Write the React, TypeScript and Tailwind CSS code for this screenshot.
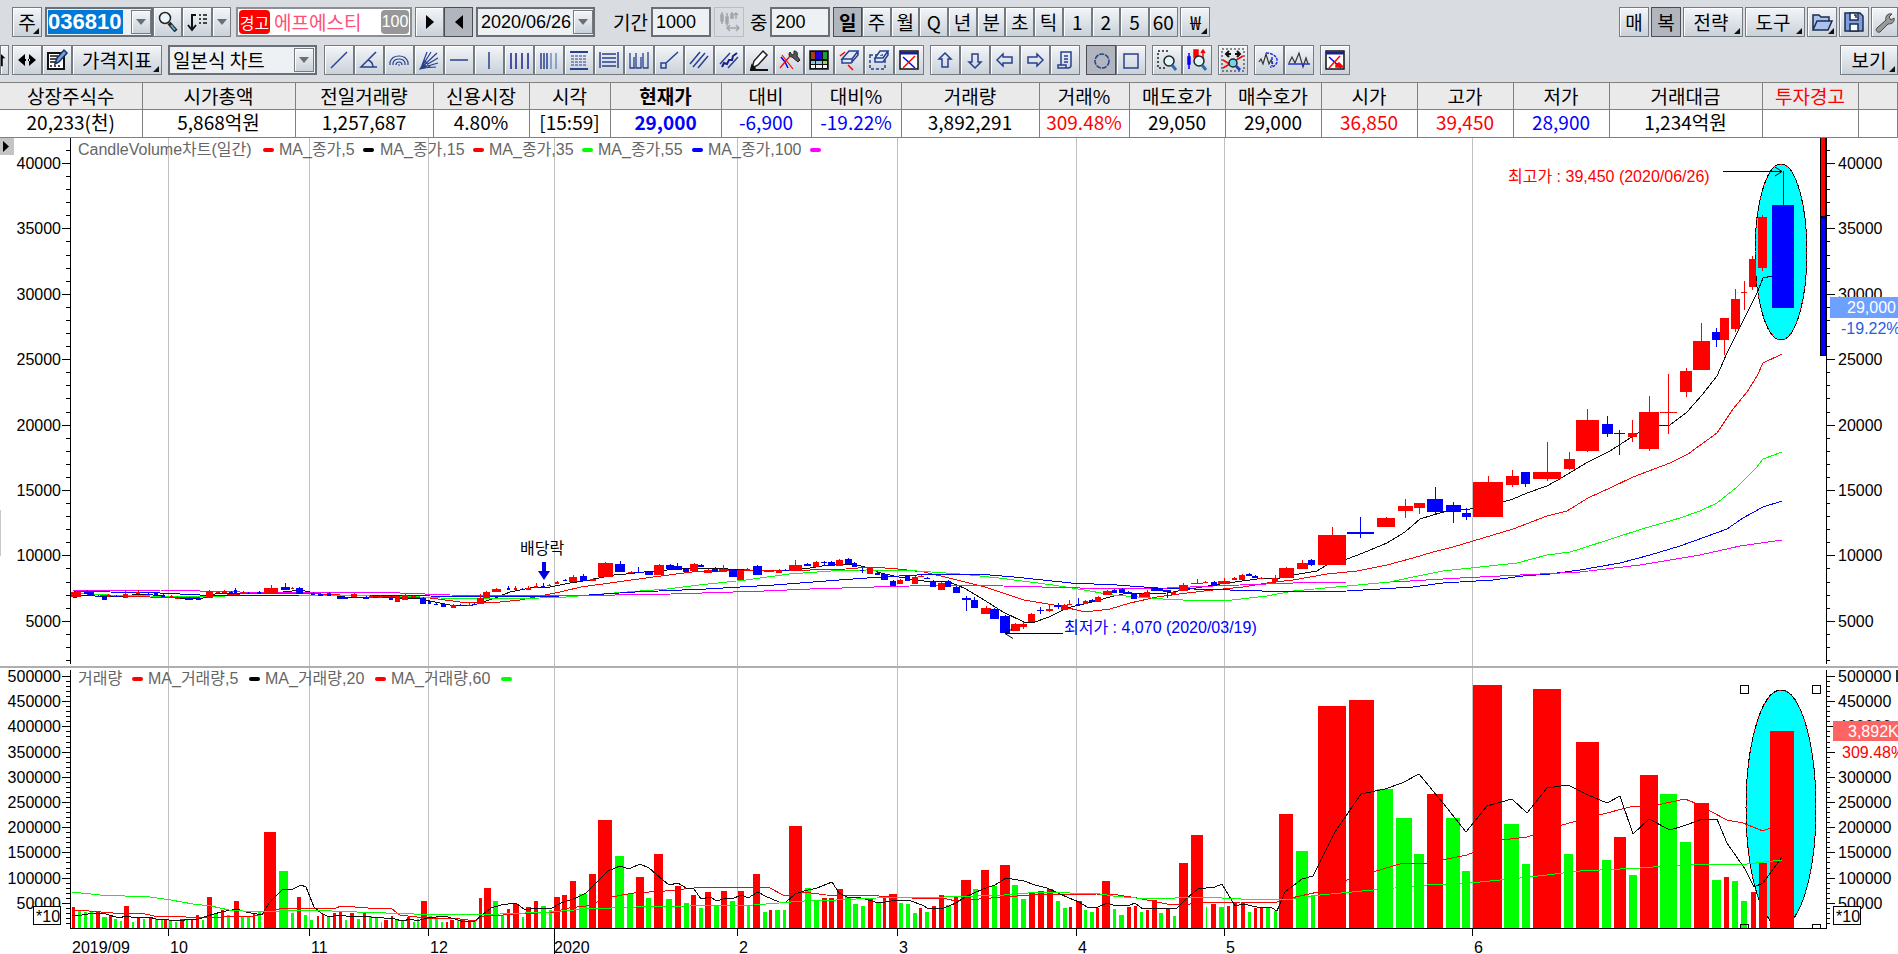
import type { ReactNode } from "react";
import clsx from "clsx";

const RED = "#ff0000";
const BLUE = "#0000ff";
const GREEN = "#00ff00";
const NAVY = "#27408f";

// x, width, top, rising
type Bar = [number, number, number, 0 | 1];
// x, width, body top, body bottom, rising, high, low
type Candle = [number, number, number, number, 0 | 1, number?, number?];

const BASE = 928;

const bars: Bar[] = [
  [72, 3, 907, 1], [78, 3, 911, 0], [84, 3, 912, 0], [90, 3, 912, 0], [96, 4, 912, 1], [102, 5, 917, 0],
  [109, 3, 915, 1], [114, 3, 919, 0], [120, 2, 921, 0], [124, 5, 906, 1], [132, 2, 922, 0], [137, 3, 918, 1],
  [143, 2, 919, 0], [149, 3, 917, 1], [155, 3, 919, 0], [161, 2, 920, 0], [164, 3, 920, 1], [169, 3, 920, 0],
  [175, 2, 922, 0], [180, 4, 919, 1], [186, 2, 919, 0], [191, 2, 919, 1], [196, 3, 915, 1], [202, 2, 920, 0],
  [207, 5, 897, 1], [214, 4, 913, 0], [221, 3, 910, 1], [227, 3, 915, 0], [234, 5, 901, 1], [241, 3, 917, 0],
  [247, 3, 916, 0], [253, 2, 913, 1], [258, 3, 912, 0], [264, 12, 832, 1], [279, 9, 871, 0], [291, 3, 913, 0],
  [297, 4, 897, 1], [304, 3, 915, 0], [310, 3, 920, 0], [317, 2, 916, 1], [322, 2, 914, 1], [327, 3, 916, 0],
  [333, 3, 913, 1], [339, 3, 912, 1], [345, 2, 920, 0], [350, 4, 913, 1], [357, 3, 919, 0], [363, 3, 913, 1],
  [369, 3, 916, 0], [375, 3, 917, 0], [381, 1, 922, 0], [384, 4, 920, 1], [391, 2, 916, 1], [395, 3, 919, 0],
  [401, 3, 921, 0], [407, 3, 917, 1], [413, 2, 922, 0], [417, 2, 919, 0], [421, 6, 901, 1], [429, 3, 916, 0],
  [435, 3, 917, 0], [441, 2, 922, 0], [446, 2, 922, 1], [450, 4, 920, 1], [457, 2, 920, 0], [460, 5, 920, 1],
  [468, 3, 920, 1], [473, 3, 920, 0], [479, 3, 898, 1], [484, 7, 888, 1], [493, 5, 901, 0], [501, 3, 915, 0],
  [507, 3, 909, 1], [513, 6, 904, 1], [522, 2, 917, 0], [526, 5, 907, 1], [534, 4, 901, 1], [541, 5, 906, 0],
  [549, 3, 910, 0], [554, 6, 897, 1], [562, 5, 895, 1], [570, 6, 881, 1], [579, 8, 894, 0], [589, 7, 874, 1],
  [598, 14, 820, 1], [615, 9, 856, 0], [627, 6, 894, 0], [636, 8, 877, 1], [646, 5, 898, 0], [654, 9, 854, 1],
  [666, 6, 899, 0], [675, 6, 886, 1], [684, 5, 903, 0], [691, 5, 895, 1], [699, 4, 908, 0], [705, 6, 892, 1],
  [714, 5, 906, 0], [721, 6, 891, 1], [730, 5, 901, 0], [738, 6, 891, 1], [747, 3, 905, 0], [753, 7, 874, 1],
  [763, 4, 912, 0], [769, 3, 910, 1], [775, 5, 910, 0], [783, 3, 910, 0], [789, 13, 826, 1], [805, 6, 888, 0],
  [814, 5, 901, 0], [822, 5, 898, 1], [829, 5, 898, 1], [837, 6, 889, 1], [845, 6, 897, 0], [853, 5, 904, 0],
  [861, 4, 906, 0], [868, 5, 899, 1], [876, 5, 903, 0], [883, 3, 897, 1], [889, 8, 894, 1], [899, 4, 903, 0],
  [906, 4, 904, 0], [913, 4, 913, 0], [919, 3, 908, 1], [925, 4, 912, 0], [932, 4, 906, 1], [939, 5, 895, 1],
  [946, 5, 905, 0], [954, 4, 896, 1], [961, 10, 880, 1], [973, 5, 889, 0], [981, 8, 870, 1], [992, 5, 886, 0],
  [1000, 10, 865, 1], [1012, 6, 885, 0], [1021, 5, 899, 0], [1029, 6, 893, 1], [1038, 6, 891, 1], [1047, 6, 889, 1],
  [1056, 4, 901, 0], [1063, 4, 908, 0], [1069, 3, 907, 1], [1076, 6, 901, 1], [1084, 3, 910, 0], [1090, 4, 912, 0],
  [1096, 3, 908, 1], [1102, 8, 881, 1], [1113, 3, 909, 0], [1119, 5, 915, 0], [1127, 4, 907, 1], [1134, 3, 906, 1],
  [1140, 3, 912, 0], [1146, 3, 910, 1], [1152, 5, 900, 1], [1159, 4, 913, 0], [1166, 4, 908, 1], [1173, 3, 916, 0],
  [1179, 9, 863, 1], [1191, 12, 835, 1], [1206, 1, 907, 0], [1211, 5, 904, 1], [1219, 5, 907, 0], [1227, 3, 906, 1],
  [1233, 4, 903, 1], [1241, 4, 903, 1], [1248, 3, 912, 0], [1254, 3, 908, 1], [1260, 3, 908, 1], [1266, 4, 908, 0],
  [1274, 3, 911, 0], [1279, 14, 814, 1], [1296, 12, 851, 0], [1311, 4, 895, 0], [1318, 28, 706, 1], [1349, 25, 700, 1],
  [1377, 16, 789, 0], [1396, 16, 818, 0], [1414, 10, 854, 0], [1427, 16, 794, 1], [1446, 14, 818, 0], [1462, 8, 871, 0],
  [1473, 29, 685, 1], [1504, 15, 824, 0], [1522, 8, 864, 0], [1533, 28, 689, 1], [1564, 9, 854, 0], [1576, 23, 742, 1],
  [1602, 9, 860, 0], [1614, 12, 837, 1], [1629, 8, 875, 0], [1640, 18, 775, 1], [1660, 17, 794, 0], [1680, 11, 842, 0],
  [1694, 15, 803, 1], [1712, 9, 880, 0], [1724, 5, 877, 1], [1732, 6, 881, 0], [1741, 6, 901, 0], [1751, 5, 892, 1],
  [1759, 8, 863, 1], [1770, 24, 731, 1],
];

const candles: Candle[] = [
  [71, 10, 592, 597, 1], [84, 6, 591, 594, 0], [88, 6, 592, 596, 0], [95, 6, 596, 597, 0], [102, 5, 597, 600, 0],
  [107, 3, 595, 597, 1], [114, 5, 596, 597, 0], [123, 5, 594, 598, 1, 591], [136, 4, 592, 594, 1, 590], [146, 5, 594, 595, 0],
  [154, 4, 593, 595, 0], [161, 4, 595, 597, 0], [170, 3, 596, 597, 1], [175, 5, 597, 599, 1], [185, 8, 598, 600, 0],
  [196, 5, 598, 600, 0], [206, 7, 591, 598, 1, 590], [216, 4, 592, 593, 1], [222, 5, 591, 593, 1], [229, 4, 592, 593, 0],
  [234, 3, 590, 594, 0, 588], [241, 4, 592, 594, 1], [247, 3, 593, 594, 0], [257, 4, 592, 594, 0], [264, 14, 588, 593, 1, 585],
  [281, 9, 587, 590, 0, 583], [291, 3, 588, 589, 1], [296, 7, 588, 594, 0], [311, 4, 593, 595, 0], [318, 5, 594, 596, 0],
  [327, 4, 593, 596, 0], [337, 11, 597, 599, 0], [351, 6, 594, 597, 1], [363, 6, 597, 599, 0], [369, 4, 596, 598, 1],
  [378, 5, 596, 598, 1], [389, 4, 597, 600, 0], [395, 5, 597, 602, 1], [402, 6, 595, 600, 1], [411, 5, 596, 598, 1],
  [420, 6, 598, 604, 0], [428, 3, 601, 604, 0], [434, 4, 604, 605, 0], [441, 5, 604, 607, 0], [451, 5, 605, 608, 1],
  [458, 5, 605, 606, 0], [467, 4, 605, 606, 1, 603], [472, 5, 604, 605, 0], [477, 7, 598, 604, 1, 594], [483, 7, 592, 598, 1],
  [492, 9, 589, 592, 1], [507, 3, 588, 590, 0, 586], [514, 3, 588, 590, 1, 586], [520, 4, 589, 590, 0], [526, 5, 588, 590, 1, 586],
  [534, 4, 586, 588, 1, 583], [541, 4, 586, 588, 0, 583], [547, 4, 585, 586, 1], [555, 4, 582, 584, 1], [563, 4, 580, 581, 0],
  [569, 8, 577, 582, 1, 575], [580, 7, 576, 581, 0, 574], [590, 6, 579, 581, 1], [598, 15, 563, 577, 1], [615, 10, 564, 572, 0, 561],
  [628, 6, 572, 573, 1], [634, 9, 572, 573, 0, 567], [645, 8, 572, 575, 0], [654, 10, 565, 575, 1], [666, 8, 565, 569, 0],
  [673, 9, 566, 570, 0, 563], [683, 6, 569, 572, 0], [690, 8, 564, 571, 1], [698, 6, 565, 567, 0], [704, 8, 570, 573, 1],
  [712, 6, 569, 572, 0, 567], [719, 9, 569, 571, 1, 565], [729, 8, 570, 577, 0], [737, 7, 570, 580, 1], [744, 6, 569, 571, 1],
  [753, 9, 566, 575, 0, 565], [764, 10, 571, 572, 1], [776, 6, 570, 573, 1], [782, 7, 570, 571, 0], [789, 13, 565, 570, 1, 560],
  [804, 7, 564, 566, 0], [813, 6, 562, 567, 1], [821, 6, 562, 563, 0, 561, 565], [828, 7, 562, 566, 0, 561], [836, 7, 560, 566, 1, 559],
  [845, 7, 559, 564, 0, 558], [852, 5, 563, 567, 0], [860, 4, 570, 571, 0, 568, 573], [867, 6, 568, 574, 1], [875, 5, 573, 575, 0],
  [881, 7, 574, 580, 0], [890, 6, 581, 586, 0], [897, 6, 580, 584, 1], [905, 5, 576, 581, 0], [912, 6, 577, 584, 1],
  [918, 6, 576, 577, 1], [924, 6, 578, 579, 0], [930, 6, 581, 587, 0], [938, 7, 583, 590, 1], [945, 6, 581, 587, 0],
  [953, 7, 587, 593, 0], [962, 9, 598, 600, 0, 596, 611], [971, 7, 600, 608, 0, 597], [981, 10, 608, 614, 1, 606], [990, 9, 609, 619, 0],
  [1000, 10, 616, 633, 0], [1011, 9, 624, 631, 1], [1019, 8, 624, 627, 1, 622, 629], [1028, 7, 614, 622, 1], [1037, 7, 610, 611, 0, 607, 614],
  [1046, 7, 609, 611, 1, 604, 612], [1054, 8, 605, 607, 0, 603, 609], [1061, 7, 605, 610, 1], [1067, 5, 604, 605, 1, 600], [1076, 5, 604, 605, 0, 598],
  [1083, 5, 601, 604, 1], [1089, 6, 600, 602, 0], [1095, 6, 597, 602, 1], [1103, 9, 591, 595, 1], [1112, 5, 590, 593, 0],
  [1119, 6, 589, 593, 0], [1125, 7, 592, 594, 0], [1131, 6, 594, 599, 0], [1139, 6, 594, 597, 1], [1144, 6, 592, 597, 1, 590],
  [1151, 12, 588, 591, 0], [1163, 8, 590, 592, 0, 590, 598], [1171, 5, 592, 595, 1], [1179, 9, 585, 591, 1, 583], [1191, 12, 583, 584, 1, 579],
  [1203, 5, 582, 583, 1], [1211, 6, 582, 586, 0], [1218, 12, 581, 584, 1, 578], [1232, 5, 578, 580, 1], [1239, 6, 575, 580, 1],
  [1246, 6, 574, 576, 0], [1252, 6, 576, 578, 0], [1258, 6, 578, 579, 1], [1272, 6, 578, 582, 1, 575], [1279, 15, 568, 578, 1],
  [1297, 11, 563, 569, 1, 560], [1308, 7, 560, 565, 0, 559, 566], [1318, 28, 535, 565, 1, 527], [1347, 27, 532, 534, 0, 517, 538],
  [1377, 18, 518, 527, 1, 517], [1398, 15, 506, 511, 1, 499, 518], [1414, 11, 503, 508, 1, 503, 514], [1427, 16, 499, 512, 0, 487, 514],
  [1446, 15, 505, 512, 0, 502, 523], [1462, 9, 513, 517, 0, 508, 520], [1473, 30, 482, 517, 1, 476], [1506, 13, 476, 485, 1, 470, 487],
  [1521, 9, 472, 484, 0, 472, 487], [1533, 28, 472, 479, 1, 442, 481], [1564, 11, 459, 469, 1, 452, 470], [1576, 23, 420, 451, 1, 409, 452],
  [1602, 11, 424, 434, 0, 416, 437], [1614, 11, 433, 434, 0, 430, 455], [1628, 9, 433, 437, 1, 420, 442], [1639, 20, 412, 449, 1, 396, 451],
  [1660, 17, 412, 413, 1, 374, 434], [1680, 12, 371, 392, 1, 368, 397], [1693, 17, 341, 370, 1, 323, 370], [1712, 9, 332, 340, 0, 328, 347],
  [1720, 9, 318, 340, 1, 318, 355], [1731, 9, 299, 329, 1, 289, 332], [1741, 6, 292, 293, 1, 281, 310], [1749, 7, 259, 287, 1, 256, 290],
  [1758, 9, 217, 268, 1, 215, 271], [1772, 22, 205, 308, 0, 171],
];

const priceLines = [
  { color: "#111111", points: "73,598 84,595 105,597 125,596 140,594 165,596 180,598 200,599 215,594 240,593 260,594 275,593 300,590 320,594 345,597 370,597 400,598 420,599 435,602 450,605 470,606 480,603 495,598 510,592 530,588 550,587 570,583 590,580 599,578 614,575 626,574 644,572 667,570 696,568 728,569 760,571 789,570 810,568 828,565 853,564 865,567 881,573 894,576 910,579 924,581 949,582 964,588 981,598 1003,612 1024,622 1035,622 1049,617 1067,608 1092,602 1110,597 1123,594 1167,593 1190,589 1220,584 1257,579 1280,578 1293,575 1317,571 1327,565 1347,559 1363,553 1387,543 1405,532 1420,519 1433,515 1447,511 1470,509 1503,502 1513,499 1527,493 1547,486 1563,477 1588,462 1610,451 1627,440 1640,432 1660,425 1670,425 1687,412 1702,395 1717,376 1727,353 1740,327 1757,293 1763,278 1772,276" },
  { color: RED, points: "73,593 100,595 150,597 200,597 240,594 300,593 340,595 400,597 430,598 460,602 490,603 520,600 545,595 560,592 581,587 617,582 653,577 692,572 728,571 760,570 810,570 846,569 871,567 898,569 924,572 949,578 985,587 1024,600 1060,606 1085,612 1110,609 1130,603 1157,597 1187,593 1213,590 1243,587 1267,583 1293,580 1327,574 1357,571 1387,565 1413,558 1433,552 1453,547 1473,541 1513,529 1547,516 1567,511 1588,498 1610,488 1633,477 1670,463 1688,454 1717,433 1733,409 1747,392 1757,376 1763,363 1782,354" },
  { color: GREEN, points: "73,593 110,595 150,596 200,597 250,595 320,595 400,596 440,598 480,599 540,598 566,597 614,593 667,589 699,585 746,580 789,574 831,571 867,570 917,571 960,574 999,578 1053,585 1078,589 1113,595 1163,599 1183,600 1232,600 1267,596 1293,591 1347,586 1390,582 1413,577 1443,571 1480,567 1517,563 1547,555 1570,552 1580,549 1642,529 1680,518 1700,511 1717,503 1737,487 1757,467 1763,459 1782,452" },
  { color: BLUE, points: "73,591 110,592 160,593 220,596 300,595 370,595 430,596 500,597 560,596 589,595 635,592 706,589 774,585 839,580 881,577 935,574 978,574 1014,577 1071,583 1117,585 1157,588 1230,590 1293,592 1347,591 1413,587 1443,583 1493,580 1523,576 1550,574 1580,570 1620,563 1650,555 1680,546 1705,537 1727,529 1743,518 1763,507 1782,501" },
  { color: "#ff00ff", points: "73,590 160,590 240,592 320,592 400,593 450,595 560,596 671,594 764,591 810,589 874,587 946,585 1003,586 1080,588 1167,588 1213,586 1293,583 1347,582 1393,582 1460,578 1520,575 1580,572 1640,565 1700,555 1740,546 1782,540" },
];

const volumeLines = [
  { color: RED, points: "72,910 89,911 113,913 141,913 154,916 186,917 214,918 221,917 254,916 266,913 279,909 304,908 336,908 341,906 368,908 392,909 400,915 425,918 452,918 476,921 480,917 514,914 554,912 569,908 586,906 611,897 634,893 665,891 694,888 726,887 768,887 785,896 804,892 826,895 879,896 911,898 947,899 956,901 979,899 1004,897 1031,895 1097,894 1118,895 1137,898 1167,904 1190,904 1203,902 1240,902 1275,903 1282,900 1318,892 1347,880 1373,872 1403,863 1427,863 1467,855 1502,840 1527,837 1562,825 1599,815 1630,807 1657,805 1685,799 1695,803 1727,820 1743,823 1763,831 1770,828" },
  { color: "#111111", points: "72,915 82,915 94,913 106,914 119,918 126,916 136,918 149,917 156,919 169,920 180,921 189,919 199,919 207,916 221,912 237,909 246,912 262,915 269,903 282,890 293,889 301,885 306,887 314,907 321,913 329,917 339,915 346,916 357,916 371,917 384,918 395,919 402,921 411,919 417,921 427,918 445,916 461,921 475,921 482,915 491,908 501,905 516,903 525,910 536,908 550,909 561,903 576,898 586,893 597,882 608,871 620,866 629,869 640,864 649,868 663,880 669,885 678,883 686,888 694,889 701,899 710,897 717,901 726,898 731,899 742,895 748,898 758,892 765,896 779,902 786,902 795,894 804,891 817,888 832,882 839,893 847,897 861,898 879,903 897,900 911,901 922,905 929,909 944,908 956,903 965,897 983,889 995,885 1006,878 1024,881 1035,885 1047,888 1058,893 1069,898 1079,902 1087,907 1098,907 1107,903 1113,905 1130,905 1135,903 1143,909 1152,908 1170,908 1176,909 1187,898 1198,889 1215,887 1222,884 1235,906 1243,904 1257,907 1272,908 1277,911 1285,892 1302,879 1313,876 1335,832 1361,794 1385,789 1402,783 1419,774 1443,803 1466,832 1487,806 1512,799 1527,813 1547,788 1568,785 1588,795 1607,803 1620,796 1633,834 1649,819 1670,830 1683,826 1700,820 1717,819 1727,843 1745,869 1754,887 1763,883 1782,857" },
  { color: GREEN, points: "72,892 100,895 150,897 171,900 193,904 211,906 229,910 257,912 307,910 357,912 443,915 500,914 550,912 586,909 636,907 690,906 754,905 804,901 836,900 897,897 944,897 1004,895 1040,892 1100,894 1113,896 1147,899 1203,897 1260,900 1293,899 1320,895 1373,890 1427,885 1470,883 1520,878 1547,875 1580,871 1640,868 1693,864 1747,864 1782,860" },
];

const months = [
  { x: 168, label: "10" },
  { x: 309, label: "11" },
  { x: 428, label: "12" },
  { x: 554, label: "2020" },
  { x: 737, label: "2" },
  { x: 897, label: "3" },
  { x: 1076, label: "4" },
  { x: 1224, label: "5" },
  { x: 1472, label: "6" },
];

const priceY = (p: number) => 163 + ((40000 - p) * 65.4) / 5000;
const volumeY = (v: number) => BASE - (v * 50.4) / 100000;

const quotes = [
  { label: "상장주식수", value: "20,233(천)" },
  { label: "시가총액", value: "5,868억원" },
  { label: "전일거래량", value: "1,257,687" },
  { label: "신용시장", value: "4.80%" },
  { label: "시각", value: "[15:59]" },
  { label: "현재가", value: "29,000", tone: "text-[#0000ff] font-bold", head: "font-bold" },
  { label: "대비", value: "-6,900", tone: "text-[#0000ff]" },
  { label: "대비%", value: "-19.22%", tone: "text-[#0000ff]" },
  { label: "거래량", value: "3,892,291" },
  { label: "거래%", value: "309.48%", tone: "text-[#ff0000]" },
  { label: "매도호가", value: "29,050" },
  { label: "매수호가", value: "29,000" },
  { label: "시가", value: "36,850", tone: "text-[#ff0000]" },
  { label: "고가", value: "39,450", tone: "text-[#ff0000]" },
  { label: "저가", value: "28,900", tone: "text-[#0000ff]" },
  { label: "거래대금", value: "1,234억원" },
  { label: "투자경고", value: "", head: "font-normal text-[#ff0000]" },
  { label: "", value: "" },
];

const colWidths = [
  "w-[142px]", "w-[153px]", "w-[138px]", "w-[96px]", "w-[81px]", "w-[111px]", "w-[90px]", "w-[90px]", "w-[138px]",
  "w-[90px]", "w-[96px]", "w-[96px]", "w-[96px]", "w-[96px]", "w-[96px]", "w-[153px]", "w-[96px]", "w-auto",
];

const face = "bg-linear-to-b from-[#f3f6f9] to-[#c9d1d9] border border-[#767b81] shadow-[inset_1px_1px_0_#ffffff]";
const field = "h-[30px] border-2 border-[#6a6f75] bg-[#eef1f4]";

function ToolButton({ label, pressed, menu, className, children }: {
  label?: string;
  pressed?: boolean;
  menu?: boolean;
  className?: string;
  children: ReactNode;
}) {
  return (
    <button
      type="button"
      aria-label={label}
      className={clsx(
        "relative h-[30px] shrink-0 flex items-center justify-center",
        pressed ? "bg-[#b1b5bd] border border-[#4b4f55]" : face,
        className ?? "w-[30px]"
      )}
    >
      {children}
      {menu && (
        <svg className="absolute right-0.5 bottom-0.5 w-1.5 h-1.5" viewBox="0 0 6 6">
          <path d="M6 0v6H0z" fill="#111" />
        </svg>
      )}
    </button>
  );
}

function Icon({ children }: { children: ReactNode }) {
  return (
    <svg className="w-6 h-6" viewBox="0 0 24 24" fill="none" stroke={NAVY} strokeWidth={1.5}>
      {children}
    </svg>
  );
}

function DropArrow() {
  return (
    <svg className="w-3 h-2" viewBox="0 0 12 8">
      <path d="M1 1h10L6 7z" fill="#6a6f75" />
    </svg>
  );
}

const drawTools: { label: string; icon: ReactNode }[] = [
  { label: "추세선", icon: <path d="M4 20 20 4" /> },
  { label: "각도선", icon: <path d="M19 4 4 19h16M11 12q5 2 5 7" /> },
  { label: "원호", icon: <path d="M3 17v-3q2-6 9-6t9 6v3M6 17v-2q1-4 6-4t6 4v2M9 17q0-3 3-3t3 3M11 17h2" strokeWidth={1.2} /> },
  { label: "부채꼴", icon: <path d="M4 20 10 4M4 20 14 4M4 20 20 5M4 20 21 10M4 20 21 15M4 20 19 19M3 21l5-8 5 6z" strokeWidth={1.2} /> },
  { label: "수평선", icon: <path d="M3 12h18" /> },
  { label: "수직선", icon: <path d="M12 4v17" /> },
  { label: "시간대", icon: <path d="M4 5v16M9 5v16M15 5v16M21 5v16" strokeWidth={1.5} stroke="#1b1f8a" /> },
  { label: "피보나치 시간대", icon: <><path d="M4 5v16M7 5v16M10 5v16" /><path d="M14 5v16M19 5v16" stroke="#6f8fbf" /></> },
  { label: "되돌림", icon: <><path d="M3 4h18M3 21h18" strokeWidth={2} /><path d="M4 8h16M4 11h16M4 14h16M4 17h16" strokeDasharray="3 1" strokeWidth={1.2} /></> },
  { label: "등분선", icon: <path d="M3 4v16M21 4v16M5 6h14M5 10h14M5 14h14M5 18h14" /> },
  { label: "사이클", icon: <path d="M3 5v15h4V9M9 5v15h5V9M16 20h5V4M7 20h1M21 20V5M16 5v15" strokeWidth={1.3} /> },
  { label: "반직선", icon: <path d="M9 15 21 4M4 15h5v5H4z" /> },
  { label: "평행선", icon: <path d="M3 16 13 4M6 19 18 5M11 20 21 8" /> },
  { label: "채널", icon: <><path d="M3 16 13 5M11 20 21 9" /><path d="m5 19 2-4 3 1 2-4 3 0 1-4 4-3" stroke="#1b1f8a" strokeWidth={2} /></> },
  { label: "펜", icon: <><path d="m5 20 2-7 9-10 4 4-9 10z" fill="#fff" stroke="#222" /><path d="m4 21 1-4 3 3z" fill="#111" stroke="#111" /><path d="M3 22h18" stroke="#111" strokeWidth={2} /></> },
  { label: "도구 설정", icon: <><path d="m4 9 4 5 3 6" stroke={BLUE} /><path d="M3 20 13 8M5 7l11 14" stroke={RED} strokeWidth={1.2} /><path d="m21 14-6-5c-3 0-4-3-2-5l2 3 2-1V3c3 0 4 2 3 5l3 4z" stroke="#222" fill="#555" strokeWidth={1} /></> },
  { label: "색상", icon: <><path d="M3 3h18v18H3z" fill="#111" stroke="#111" /><path d="M4 4h4v7H4z" fill="#a33c1a" stroke="none" /><path d="M9 4h6v7H9z" fill="#2200dd" stroke="none" /><path d="M16 4h4v7h-4z" fill="#18a030" stroke="none" /><path d="M4 13h4v3H4zM9 13h6v3H9z" fill="#7cc8f0" stroke="none" /><path d="M16 13h4v3h-4z" fill="#8be04c" stroke="none" /><path d="M4 17h4v3H4zM9 17h6v3H9zM16 17h4v3h-4z" fill="#f4f4f4" stroke="none" /></> },
  { label: "지우개", icon: <><path d="M3 8 8 4M11 17l5 5" stroke={RED} /><path d="m5 11 7-8h9l-6 8zM5 11v4h9l7-8V3M15 11v4" fill="#dfe9fb" /></> },
  { label: "영역 지우기", icon: <><path d="M3 7h15v14H3z" strokeDasharray="3 2" /><path d="m8 10 5-7h8l-5 7zM8 10v4h8l5-7V3" fill="#dfe9fb" /></> },
  { label: "모두 지우기", icon: <><path d="M3 3h18v18H3z" fill="#fff" stroke="#111" /><path d="M3 5h18" stroke="#1b1f8a" strokeWidth={3} /><path d="m6 9 12 11" stroke={BLUE} /><path d="M18 8 6 20" stroke={RED} /></> },
];

const arrowTools: { label: string; icon: ReactNode }[] = [
  { label: "위", icon: <path d="m12 5 6 6h-3v8H9v-8H6z" /> },
  { label: "아래", icon: <path d="m12 20 6-6h-3V6H9v8H6z" /> },
  { label: "왼쪽", icon: <path d="m4 12 6-6v3h9v6h-9v3z" /> },
  { label: "오른쪽", icon: <path d="m20 12-6-6v3H5v6h9v3z" /> },
  { label: "메모", icon: <path d="M8 4h10v13a3 3 0 0 1-3 3H5v-3h3zM11 8h4M11 11h4M11 14h4M5 17h8v3" /> },
];

const magnifier = (
  <>
    <circle cx="14" cy="13" r="5" fill="#dff6fb" stroke="#222" />
    <path d="m17 17 4 5" stroke="#2f6fa8" strokeWidth={3} />
  </>
);

function Toolbar() {
  return (
    <div className="bg-[#d9dde1] h-[82px] pt-[7px] flex flex-col gap-2 overflow-hidden">
      <div className="flex items-center pl-3">
        <ToolButton menu>주</ToolButton>
        <div className={clsx("flex items-center ml-[3px] w-[108px]", field)}>
          <input
            aria-label="종목코드"
            defaultValue="036810"
            className="w-[75px] h-6 ml-px bg-[#0078d7] text-white text-[22px] font-bold font-['Liberation_Sans',sans-serif] outline-none"
          />
          <button type="button" aria-label="종목 목록" className={clsx("ml-auto w-5 h-6 flex items-center justify-center", face)}>
            <DropArrow />
          </button>
        </div>
        <ToolButton label="종목 검색" className="w-[29px]">
          <Icon>
            <circle cx="9" cy="8" r="5.5" fill="#e9f6fb" stroke="#222" />
            <path d="m13 13 7 8" stroke="#222" strokeWidth={4} />
            <path d="m15 15 4 5" stroke="#4fb4d8" strokeWidth={2} />
          </Icon>
        </ToolButton>
        <ToolButton label="정렬">
          <Icon>
            <path d="M11 5H7v14M3 15l4 5 4-5" stroke="#111" strokeWidth={2} />
            <path d="M14 5h2M14 9h2M14 13h2M18 5h4M18 9h4M18 13h4" stroke="#111" />
          </Icon>
        </ToolButton>
        <ToolButton label="정렬 목록" className="w-[19px]"><DropArrow /></ToolButton>
        <div className="flex items-center ml-[5px] w-[176px] h-[30px] border-2 border-[#8b9096] bg-white px-px">
          <span className="bg-[#ff0000] text-white rounded-sm h-6 w-[31px] text-[16px] leading-6 text-center shrink-0">경고</span>
          <span className="text-[#ff4f78] ml-1 whitespace-nowrap">에프에스티</span>
          <span className="ml-auto bg-[#979797] text-white text-[16px] font-['Liberation_Sans',sans-serif] rounded-sm w-7 h-6 leading-6 text-center shrink-0">100</span>
        </div>
        <ToolButton label="다음" className="ml-[3px] w-[29px]">
          <svg className="w-3 h-4" viewBox="0 0 12 16"><path d="M2 1v14l8-7z" /></svg>
        </ToolButton>
        <ToolButton label="이전" pressed className="w-[29px]">
          <svg className="w-3 h-4" viewBox="0 0 12 16"><path d="M10 1v14L2 8z" /></svg>
        </ToolButton>
        <div className={clsx("flex items-center ml-[3px] w-[119px]", field)}>
          <input
            aria-label="날짜"
            defaultValue="2020/06/26"
            className="w-[94px] pl-[3px] text-[18px] font-['Liberation_Sans',sans-serif] outline-none"
          />
          <button type="button" aria-label="달력" className={clsx("ml-auto w-5 h-6 flex items-center justify-center shrink-0", face)}>
            <DropArrow />
          </button>
        </div>
        <label htmlFor="period" className="ml-[18px] mr-[3px]">기간</label>
        <input
          id="period"
          defaultValue="1000"
          className={clsx("w-[60px] pl-[3px] text-[18px] font-['Liberation_Sans',sans-serif] outline-none", field)}
        />
        <button type="button" aria-label="간격" className="ml-[3px] w-[30px] h-[30px] border border-[#b9bec4] flex items-center justify-center">
          <Icon>
            <path d="M5 2v12M10 3v13M15 2v7M19 3v6M17 5l2-2 2 2M10 18h12M13 15l-3 3 3 3M19 15l3 3-3 3" stroke="#a2a6aa" />
            <path d="M4 5h2v6H4zM9 7h2v6H9zM14 4h2v4h-2z" fill="#a2a6aa" stroke="#a2a6aa" />
          </Icon>
        </button>
        <label htmlFor="visible" className="ml-[6px] mr-[3px]">중</label>
        <input
          id="visible"
          defaultValue="200"
          className={clsx("w-[60px] pl-[3px] text-[18px] font-['Liberation_Sans',sans-serif] outline-none", field)}
        />
        <div className="flex ml-[3px] w-[344px]">
          {["일", "주", "월", "Q", "년", "분", "초", "틱", "1", "2", "5", "60"].map((unit) => (
            <ToolButton key={unit} pressed={unit === "일"} className={clsx("flex-1", unit === "일" && "font-bold")}>
              {unit}
            </ToolButton>
          ))}
        </div>
        <ToolButton menu className="ml-[3px] w-[30px]">₩</ToolButton>
        <div className="flex gap-0.5 ml-auto">
          <ToolButton>매</ToolButton>
          <ToolButton pressed>복</ToolButton>
          <ToolButton menu className="w-[60px] pr-1">전략</ToolButton>
          <ToolButton menu className="w-[60px] pr-1">도구</ToolButton>
          <ToolButton label="열기" menu>
            <Icon>
              <path d="M3 20V5h6l2 2h8v4M3 20l4-9h15l-4 9z" fill="#a9c2ee" stroke="#1d2c50" />
            </Icon>
          </ToolButton>
          <ToolButton label="저장">
            <Icon>
              <path d="M3 3h15l3 3v15H3z" fill="#7fa0dd" stroke="#1d2c50" />
              <path d="M8 3h8v7H8zM8 14h8v7H8z" fill="#fff" stroke="#1d2c50" />
              <path d="M12 5h2v3" stroke="#1d2c50" />
            </Icon>
          </ToolButton>
          <ToolButton label="설정" className="w-[27px]">
            <Icon>
              <path d="m4 18 9-8c-1-4 2-7 6-6l-3 3 2 3 3-2c1 4-2 6-6 6l-8 8c-3 1-5-2-3-4z" fill="#9a9a9a" stroke="#444" strokeWidth={1} />
            </Icon>
          </ToolButton>
        </div>
      </div>

      <div className="flex items-center">
        <ToolButton label="위로" className="w-[9px] overflow-hidden">
          <svg className="w-2 h-4" viewBox="0 0 8 16"><path d="M0 1l5 5H2v9H0z" /></svg>
        </ToolButton>
        <ToolButton label="좌우 이동" className="ml-[3px] w-[30px]">
          <svg className="w-5 h-4" viewBox="0 0 20 16">
            <path d="M8 2v12L1 8zM12 2v12l7-6zM7 7h2v2H7zM11 7h2v2h-2z" />
          </svg>
        </ToolButton>
        <ToolButton label="편집">
          <Icon>
            <path d="M3 5h16v16H3z" fill="#fff" stroke="#111" strokeWidth={2} />
            <path d="M5 8h8M5 11h6M5 14h5" stroke="#111" />
            <path d="M5 18h11" stroke="#111" strokeDasharray="2 2" />
            <path d="m10 16 2-6 7-8 3 3-8 9z" fill="#7aa0d8" stroke="#16305f" />
          </Icon>
        </ToolButton>
        <ToolButton menu className="w-[90px]">가격지표</ToolButton>
        <div className="relative ml-1.5 w-[149px]">
          <select aria-label="차트 종류" className={clsx("appearance-none w-full pl-[3px] outline-none", field)}>
            <option>일본식 차트</option>
          </select>
          <span className={clsx("absolute right-[3px] top-[3px] w-5 h-6 flex items-center justify-center pointer-events-none", face)}>
            <DropArrow />
          </span>
        </div>
        <div className="flex ml-[7px]">
          {drawTools.map((tool) => (
            <ToolButton key={tool.label} label={tool.label}><Icon>{tool.icon}</Icon></ToolButton>
          ))}
        </div>
        <div className="flex ml-1.5">
          {arrowTools.map((tool) => (
            <ToolButton key={tool.label} label={tool.label}><Icon>{tool.icon}</Icon></ToolButton>
          ))}
        </div>
        <div className="flex ml-1.5">
          <ToolButton label="타원" pressed><Icon><circle cx="13" cy="13" r="7" strokeDasharray="5 1" /></Icon></ToolButton>
          <ToolButton label="사각형"><Icon><path d="M5 6h14v14H5z" /></Icon></ToolButton>
        </div>
        <div className="flex ml-1.5">
          <ToolButton label="영역 확대">
            <Icon>
              <path d="M13 3H3v17h8" stroke="#222" strokeDasharray="2 2" />
              {magnifier}
            </Icon>
          </ToolButton>
          <ToolButton label="차트 확대">
            <Icon>
              <path d="M4 5v16M3 9h2v7H3z" stroke={BLUE} fill={BLUE} />
              <path d="M9 2h4v7H9zM18 10V3M16 5l2-3 2 3" stroke={RED} fill={RED} />
              {magnifier}
            </Icon>
          </ToolButton>
        </div>
        <div className="flex ml-1.5">
          <ToolButton label="전체 보기">
            <Icon>
              <path d="M1 1h22v22H1z" stroke="#222" strokeWidth={1} strokeDasharray="2 2" />
              <path d="M5 6h5M14 6h5M8 3 5 6l3 3M16 3l3 3-3 3" stroke="#111" strokeWidth={2} />
              <path d="M2 20 22 8M2 12l8 5" stroke={RED} />
              <circle cx="12" cy="15" r="4" fill="#6fd6e8" stroke="#222" />
              <path d="m15 18 4 4" stroke="#223fc0" strokeWidth={3} />
            </Icon>
          </ToolButton>
        </div>
        <div className="flex ml-1.5">
          <ToolButton label="파동">
            <Icon>
              <path d="m2 14 2-3 2 5 3-10 3 10 2-4 2 4" stroke="#333" strokeWidth={1.2} />
              <path d="M9 5c7 0 12 4 11 9-1 3-3 5-7 5M15 9v9" stroke="#2233dd" strokeDasharray="3 1" />
            </Icon>
          </ToolButton>
          <ToolButton label="파동 비교">
            <Icon>
              <path d="m2 15 3-6 3 6 4-10 4 14 3-9 2 6" stroke="#333" strokeWidth={1.2} />
              <path d="M1 16h22" stroke="#2233dd" />
            </Icon>
          </ToolButton>
        </div>
        <ToolButton label="선 삭제" className="ml-1.5 w-[30px]">
          <Icon>
            <path d="M3 3h18v18H3z" fill="#fff" stroke="#111" />
            <path d="M3 5h18" stroke="#1b1f8a" strokeWidth={3} />
            <path d="m6 9 12 11" stroke={BLUE} />
            <path d="M17 8 6 20" stroke={RED} />
            <path d="M13 19v-2l3-2 4 4z" stroke={RED} fill={RED} />
          </Icon>
        </ToolButton>
        <ToolButton menu className="ml-auto w-[58px]">보기</ToolButton>
      </div>
    </div>
  );
}

function QuoteTable() {
  return (
    <table className="w-full table-fixed border-collapse text-center whitespace-nowrap leading-5">
      <colgroup>
        {colWidths.map((w, i) => <col key={i} className={w} />)}
      </colgroup>
      <thead>
        <tr className="h-[27px] bg-[#eaeaea]">
          {quotes.map((q, i) => (
            <th key={i} className={clsx("p-0 border border-[#808080] border-l-0", q.head ?? "font-normal")}>{q.label}</th>
          ))}
        </tr>
      </thead>
      <tbody>
        <tr className="h-7 bg-white">
          {quotes.map((q, i) => (
            <td key={i} className={clsx("p-0 pb-1 border border-[#808080] border-l-0", q.tone)}>{q.value}</td>
          ))}
        </tr>
      </tbody>
    </table>
  );
}

function Axis({ x, dir, ticks, major, y, hidden }: {
  x: number;
  dir: 1 | -1;
  ticks: number[];
  major: number;
  y: (v: number) => number;
  hidden?: number;
}) {
  return (
    <g>
      {ticks.map((v) => (
        <rect
          key={v}
          x={dir === 1 ? x : x - (v % major === 0 ? 8 : 4)}
          y={Math.round(y(v))}
          width={v % major === 0 ? 9 : 4}
          height={1}
        />
      ))}
      {ticks.filter((v) => v % major === 0 && v !== hidden).map((v) => (
        <text key={v} x={x + dir * (dir === 1 ? 12 : 9)} y={Math.round(y(v)) + 6} textAnchor={dir === 1 ? "start" : "end"}>{v}</text>
      ))}
    </g>
  );
}

function Legend({ y, items }: { y: number; items: { x: number; text: string; pill: number; color: string }[] }) {
  return (
    <g fill="#666666">
      {items.map((item) => (
        <g key={item.text}>
          <text x={item.x} y={y}>{item.text}</text>
          <rect x={item.pill} y={y - 7} width={11} height={4} rx={2} fill={item.color} />
        </g>
      ))}
    </g>
  );
}

const priceTicks = Array.from({ length: 40 }, (_, i) => (i + 2) * 1000);
const volumeTicks = Array.from({ length: 50 }, (_, i) => (i + 1) * 10000);

const chartFont = "block w-full text-[16px] font-['Liberation_Sans','Noto_Sans_CJK_KR',sans-serif]";

function PriceChart() {
  return (
    <svg className={chartFont} viewBox="0 138 1898 528" role="img" aria-label="일간 가격 차트">
      {months.map((m) => <rect key={m.x} x={m.x} y={138} width={1} height={528} fill="#c0c0c0" />)}
      <rect x={0} y={138} width={14} height={17} fill="#c4c4c4" />
      <path d="M3 141v11l6-5.500z" />
      <rect x={0} y={510} width={1} height={46} fill="#c8c8c8" />

      <g shapeRendering="crispEdges">
        <rect x={70} y={138} width={1} height={526} />
        <rect x={1826} y={138} width={1} height={526} />
        <rect x={1820} y={138} width={7} height={218} />
        <rect x={1821} y={138} width={4} height={78} fill={RED} />
        <rect x={1821} y={218} width={4} height={137} fill={BLUE} />
      </g>
      <Axis x={70} dir={-1} ticks={priceTicks} major={5000} y={priceY} />
      <Axis x={1826} dir={1} ticks={priceTicks} major={5000} y={priceY} />

      <g shapeRendering="crispEdges">
        <ellipse cx={1781} cy={252} rx={26} ry={88} fill="#00ffff" stroke="#000" />
        <ellipse cx={1781} cy={252} rx={26} ry={88} fill="none" stroke={RED} strokeDasharray="2 5" />
        {priceLines.map((line) => (
          <polyline key={line.color} points={line.points} fill="none" stroke={line.color} />
        ))}
        {candles.map(([x, w, top, bottom, up, high, low]) => (
          <g key={x} fill={up ? RED : BLUE}>
            <rect x={x} y={top} width={w} height={bottom - top} />
            <rect x={x + Math.floor(w / 2)} y={high ?? top - 1} width={1} height={(low ?? bottom) - (high ?? top - 1)} />
          </g>
        ))}
      </g>

      <path d="M1723 171.500h59M1775 167l7 4.500-7 4.500" fill="none" stroke="#000" />
      <text x={1508} y={182} fill={RED}>최고가 : 39,450 (2020/06/26)</text>
      <path d="M1063 633.500h-58M1012 629l-7 4.500 8 5" fill="none" stroke="#000" />
      <text x={1064} y={633} fill={BLUE}>최저가 : 4,070 (2020/03/19)</text>
      <text x={520} y={554}>배당락</text>
      <path d="M542 562h4v9h4l-6 9-6-9h4z" fill="#0000e0" />

      <Legend
        y={155}
        items={[
          { x: 78, text: "CandleVolume차트(일간)", pill: 263, color: RED },
          { x: 279, text: "MA_종가,5", pill: 363, color: "#000" },
          { x: 380, text: "MA_종가,15", pill: 473, color: RED },
          { x: 489, text: "MA_종가,35", pill: 582, color: GREEN },
          { x: 598, text: "MA_종가,55", pill: 692, color: BLUE },
          { x: 708, text: "MA_종가,100", pill: 810, color: "#ff00ff" },
        ]}
      />

      <rect x={1830} y={297} width={68} height={21} fill="#6ea0ff" />
      <text x={1847} y={313} fill="#fff">29,000</text>
      <text x={1841} y={334} fill="#1f5fe0">-19.22%</text>
    </svg>
  );
}

function ScaleBox({ x }: { x: number }) {
  return (
    <>
      <rect x={x + 0.5} y={906.5} width={27} height={18} fill="#fff" stroke="#000" />
      <text x={x + 3} y={922}>*10</text>
    </>
  );
}

function VolumeChart() {
  return (
    <svg className={chartFont} viewBox="0 668 1898 286" role="img" aria-label="거래량 차트">
      {months.map((m) => <rect key={m.x} x={m.x} y={668} width={1} height={260} fill="#c0c0c0" />)}
      <Axis x={70} dir={-1} ticks={volumeTicks} major={50000} y={volumeY} />
      <Axis x={1826} dir={1} ticks={volumeTicks} major={50000} y={volumeY} hidden={350000} />
      <rect x={1896} y={670} width={2} height={12} fill="#333" />

      <g shapeRendering="crispEdges">
        <ellipse cx={1781} cy={808} rx={35} ry={118} fill="#00ffff" stroke="#000" />
        <ellipse cx={1781} cy={808} rx={35} ry={118} fill="none" stroke={RED} strokeDasharray="2 5" />
        {bars.map(([x, w, top, up]) => (
          <rect key={x} x={x} y={top} width={w} height={BASE - top} fill={up ? RED : GREEN} />
        ))}
        {volumeLines.map((line) => (
          <polyline key={line.color} points={line.points} fill="none" stroke={line.color} />
        ))}
        <rect x={70} y={670} width={1} height={258} />
        <rect x={1826} y={670} width={1} height={258} />
        <rect x={70} y={BASE} width={1757} height={1} />
        <path d="M1740.500 685.500h8v8h-8zM1812.500 685.500h8v8h-8zM1740.500 928v-4h8v4M1812.500 928v-4h8v4" fill="none" stroke="#000" />
      </g>

      {months.map((m) => (
        <g key={m.x}>
          <rect x={m.x} y={BASE} width={1} height={m.label === "2020" ? 26 : 8} />
          <text x={m.label === "2020" ? m.x : m.x + 2} y={953}>{m.label}</text>
        </g>
      ))}
      <text x={72} y={953}>2019/09</text>

      <Legend
        y={684}
        items={[
          { x: 78, text: "거래량", pill: 132, color: RED },
          { x: 148, text: "MA_거래량,5", pill: 249, color: "#000" },
          { x: 265, text: "MA_거래량,20", pill: 375, color: RED },
          { x: 391, text: "MA_거래량,60", pill: 501, color: GREEN },
        ]}
      />

      <ScaleBox x={33} />
      <ScaleBox x={1833} />
      <rect x={1833} y={721} width={65} height={20} fill="#ff6464" />
      <text x={1848} y={737} fill="#fff">3,892K</text>
      <text x={1842} y={758} fill={RED}>309.48%</text>
    </svg>
  );
}

export default function App() {
  return (
    <div className="w-full bg-white text-black text-[19px] leading-6 font-['Noto_Sans_CJK_KR',sans-serif] overflow-hidden">
      <Toolbar />
      <QuoteTable />
      <main>
        <PriceChart />
        <div className="h-0.5 bg-[#aeaeae]" />
        <VolumeChart />
      </main>
    </div>
  );
}
